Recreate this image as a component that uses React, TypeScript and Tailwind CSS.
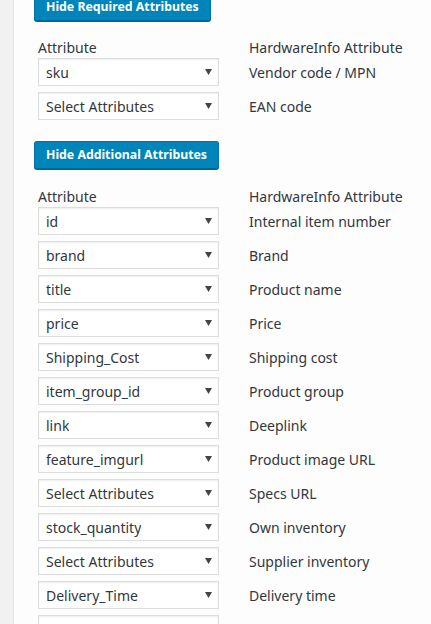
import React from "react";

const requiredRows = [
  { value: "sku", label: "Vendor code / MPN" },
  { value: "Select Attributes", label: "EAN code" },
];

const additionalRows = [
  { value: "id", label: "Internal item number" },
  { value: "brand", label: "Brand" },
  { value: "title", label: "Product name" },
  { value: "price", label: "Price" },
  { value: "Shipping_Cost", label: "Shipping cost" },
  { value: "item_group_id", label: "Product group" },
  { value: "link", label: "Deeplink" },
  { value: "feature_imgurl", label: "Product image URL" },
  { value: "Select Attributes", label: "Specs URL" },
  { value: "stock_quantity", label: "Own inventory" },
  { value: "Select Attributes", label: "Supplier inventory" },
  { value: "Delivery_Time", label: "Delivery time" },
  { value: "", label: "" },
];

const FakeSelect = ({ value }: { value: string }) => (
  <div className="flex h-[28px] w-[181px] items-center justify-between border border-[#ddd] bg-white pl-[7px] pr-[6px] shadow-[inset_0_1px_2px_rgba(0,0,0,0.07)]">
    <span className="truncate">{value}</span>
    <svg width="7" height="6" viewBox="0 0 7 6" className="shrink-0">
      <polygon points="0,0 7,0 3.5,6" fill="#444" />
    </svg>
  </div>
);

const AttributeTable = ({ rows }: { rows: { value: string; label: string }[] }) => (
  <div className="mt-[17px] pl-[4px]">
    <div className="flex h-[20px] items-center">
      <span className="w-[211px]">Attribute</span>
      <span>HardwareInfo Attribute</span>
    </div>
    <div className="mt-[1px] flex flex-col gap-[6px]">
      {rows.map((row, i) => (
        <div key={i} className="flex items-center">
          <FakeSelect value={row.value} />
          <span className="ml-[30px]">{row.label}</span>
        </div>
      ))}
    </div>
  </div>
);

const ToggleButton = ({ children }: { children: React.ReactNode }) => (
  <button className="flex h-[28px] items-center rounded-[3px] border border-[#0073aa] border-b-[#006799] bg-[#0085ba] px-[11px] text-[12.3px] font-bold text-white shadow-[0_1px_0_#006799]">
    {children}
  </button>
);

export default function App() {
  return (
    <div
      className="flex h-[624px] overflow-hidden bg-[#f1f1f1] text-[14px] text-[#32373c]"
      style={{ fontFamily: '"Segoe UI", "Noto Sans", sans-serif' }}
    >
      <div className="w-[14px] shrink-0 border-r border-[#e5e5e5]" />
      <div className="flex-1 bg-[#fdfdfd] pl-[20px]">
        <div className="-mt-[7px] pb-[-1px]">
          <ToggleButton>Hide Required Attributes</ToggleButton>
        </div>
        <div className="-mt-[1px]">
          <AttributeTable rows={requiredRows} />
        </div>
        <div className="mt-[21px]">
          <ToggleButton>Hide Additional Attributes</ToggleButton>
        </div>
        <AttributeTable rows={additionalRows} />
      </div>
    </div>
  );
}
